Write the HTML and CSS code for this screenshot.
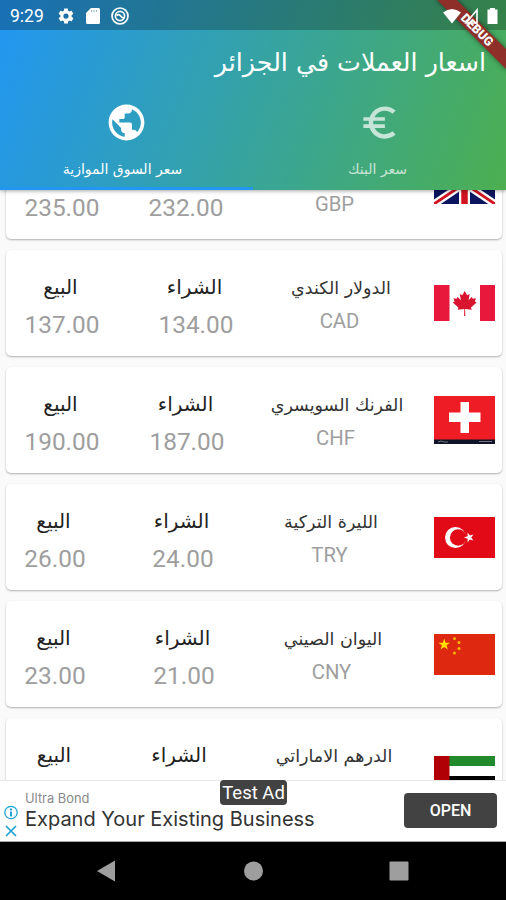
FILE: index.html
```html
<!DOCTYPE html>
<html lang="ar">
<head>
<meta charset="utf-8">
<title>اسعار العملات في الجزائر</title>
<link rel="stylesheet" href="styles.css">
</head>
<body>
<div class="phone">
  <header class="appbar">
    <div class="statusbar">
      <span class="clock">9:29</span>
      <svg class="st gear" viewBox="0 0 24 24"><path fill="#fff" fill-rule="evenodd" d="M19.4 13a7.500 7.500 0 0 0 0-2l2.100-1.600a.5.5 0 0 0 .1-.65l-2-3.450a.5.5 0 0 0-.6-.22l-2.500 1a7.300 7.300 0 0 0-1.700-1l-.37-2.650A.5.5 0 0 0 14 2h-4a.5.5 0 0 0-.5.42l-.37 2.650a7.700 7.700 0 0 0-1.700 1l-2.500-1a.5.5 0 0 0-.6.22l-2 3.450a.5.500 0 0 0 .12.65L4.600 11a8 8 0 0 0 0 2l-2.100 1.600a.5.5 0 0 0-.12.65l2 3.450c.12.22.39.300.6.22l2.500-1a7.300 7.300 0 0 0 1.700 1l.37 2.650c.04.24.25.42.5.42h4a.5.5 0 0 0 .5-.42l.37-2.650a7.700 7.700 0 0 0 1.700-1l2.500 1c.22.08.480 0 .6-.22l2-3.450a.5.5 0 0 0-.12-.65zM12 15.500a3.500 3.500 0 1 1 0-7 3.500 3.500 0 0 1 0 7z"/></svg>
      <svg class="st card-icon" viewBox="0 0 14 16"><path fill="#fff" d="M5 0h7.500Q14 0 14 1.500v13q0 1.500-1.500 1.500h-11Q0 16 0 14.500V5z"/><path stroke="#8fb4c8" stroke-width="1" d="M5.500 2v2M8 2v2M10.500 2v2"/></svg>
      <svg class="st" viewBox="0 0 18 18" fill="none" stroke="#fff"><circle cx="9" cy="9" r="8" stroke-width="1.700"/><circle cx="9" cy="9" r="4.600" stroke-width="1.700"/><path stroke-width="1.700" d="M5.500 8.500q2.500-2 4 .2t3.500 2.300"/></svg>
      <svg class="signals" viewBox="0 0 56 17"><path fill="#fff" d="M0 4.500Q9-2.500 18 4.500L9 15.500z"/><path fill="none" stroke="#fff" stroke-width="1.600" d="M34 2v13H23z"/><path fill="#fff" d="M44.500 1.500H47V0h5v1.500h2.500V16h-10z"/></svg>
    </div>
    <h1 dir="rtl">اسعار العملات في الجزائر</h1>
    <nav class="tabs">
      <div class="tab active">
        <svg viewBox="0 0 24 24"><path fill="#fff" d="M12 2C6.480 2 2 6.480 2 12s4.480 10 10 10 10-4.480 10-10S17.520 2 12 2zm-1 17.930c-3.950-.49-7-3.850-7-7.930 0-.62.080-1.210.210-1.790L9 15v1c0 1.100.9 2 2 2v1.930zm6.900-2.540c-.26-.81-1-1.390-1.900-1.390h-1v-3c0-.55-.45-1-1-1H8v-2h2c.55 0 1-.45 1-1V7h2c1.100 0 2-.9 2-2v-.41c2.930 1.190 5 4.060 5 7.410 0 2.080-.8 3.970-2.100 5.390z"/></svg>
        <span class="tablabel" dir="rtl">سعر السوق الموازية</span>
      </div>
      <div class="tab">
        <svg viewBox="0 0 24 24"><path fill="#fff" d="M15 18.500c-2.510 0-4.680-1.420-5.760-3.500H15v-2H8.580c-.05-.33-.08-.66-.08-1s.03-.67.080-1H15V9H9.240C10.320 6.920 12.500 5.500 15 5.500c1.610 0 3.090.59 4.230 1.570L21 5.300C19.410 3.870 17.300 3 15 3c-3.920 0-7.240 2.510-8.480 6H3v2h3.060c-.04.33-.06.66-.06 1s.02.67.06 1H3v2h3.520c1.240 3.490 4.560 6 8.480 6 2.310 0 4.410-.87 6-2.300l-1.780-1.770c-1.130.98-2.600 1.570-4.220 1.570z"/></svg>
        <span class="tablabel bank" dir="rtl">سعر البنك</span>
      </div>
    </nav>
    <div class="ribbon"><span>DEBUG</span></div>
  </header>

  <main class="list">
    <article class="rate gbp">
      <div class="price"><b></b><i>235.00</i></div>
      <div class="price"><b></b><i>232.00</i></div>
      <div class="name"><b></b><i>GBP</i></div>
      <svg class="flag" width="61" height="41" viewBox="0 0 61 41"><path fill="#0b1560" d="M0 0h61v41H0z"/><path stroke="#fff" stroke-width="7.500" d="M0 0l61 41M61 0L0 41"/><path stroke="#d01422" stroke-width="2.800" d="M0 0l61 41M61 0L0 41"/><path stroke="#fff" stroke-width="11" d="M30.500 0v41"/><path stroke="#fff" stroke-width="10" d="M0 20.500h61"/><path stroke="#d01422" stroke-width="6.500" d="M30.500 0v41M0 20.500h61"/></svg>
    </article>
    <article class="rate cad">
      <div class="price"><b>البيع</b><i>137.00</i></div>
      <div class="price"><b>الشراء</b><i>134.00</i></div>
      <div class="name"><b>الدولار الكندي</b><i>CAD</i></div>
      <svg class="flag" width="61" height="36" viewBox="0 0 61 36"><path fill="#fff" d="M0 0h61v36H0z"/><path fill="#e8173c" d="M0 0h15.500v36H0zM46 0h15v36H46z"/><path fill="#d8142f" d="M30.700 6l2.400 4.300 2.500-1.300-1 6.200 3.300-3.400.7 2 3.400-.6-1.200 3.400 1.800 1-5.600 4.800.7 2.300-6.600-.8.200 7h-1.200l.2-7-6.600.8.700-2.300-5.600-4.800 1.800-1-1.200-3.400 3.400.6.700-2 3.300 3.400-1-6.200 2.500 1.300z"/></svg>
    </article>
    <article class="rate chf">
      <div class="price"><b>البيع</b><i>190.00</i></div>
      <div class="price"><b>الشراء</b><i>187.00</i></div>
      <div class="name"><b>الفرنك السويسري</b><i>CHF</i></div>
      <svg class="flag" width="61" height="48" viewBox="0 0 61 48"><path fill="#ee1c24" d="M0 0h61v44H0z"/><path fill="#101426" d="M0 43.500h61V48H0z"/><path fill="#fff" d="M26.500 6h8.500v10.500h11.500V26H35v11h-8.500V26H15v-9.500h11.500z"/><path fill="none" stroke="#8a8c99" stroke-width=".8" d="M4 46l3-1 3 1h4M45 45.500h13"/></svg>
    </article>
    <article class="rate try">
      <div class="price"><b>البيع</b><i>26.00</i></div>
      <div class="price"><b>الشراء</b><i>24.00</i></div>
      <div class="name"><b>الليرة التركية</b><i>TRY</i></div>
      <svg class="flag" width="61" height="41" viewBox="0 0 61 41"><path fill="#e30a17" d="M0 0h61v41H0z"/><circle cx="21.500" cy="20.500" r="10.500" fill="#fff"/><circle cx="24.200" cy="20.500" r="8.300" fill="#e30a17"/><path fill="#fff" d="M30 20.500l3.600-1.200v-3.800l2.300 3.100 3.600-1.200-2.300 3.100 2.300 3.100-3.600-1.200-2.300 3.100v-3.800z"/></svg>
    </article>
    <article class="rate cny">
      <div class="price"><b>البيع</b><i>23.00</i></div>
      <div class="price"><b>الشراء</b><i>21.00</i></div>
      <div class="name"><b>اليوان الصيني</b><i>CNY</i></div>
      <svg class="flag" width="61" height="41" viewBox="0 0 61 41"><path fill="#de2910" d="M0 0h61v41H0z"/><path fill="#ffde00" d="M10.200 4.500l1.400 4.200H16l-3.500 2.600 1.300 4.200-3.600-2.600-3.600 2.600 1.300-4.200-3.500-2.600h4.400z"/><g fill="#f5b800"><circle cx="20.500" cy="4.500" r="1.500"/><circle cx="25" cy="8.500" r="1.500"/><circle cx="25" cy="14.500" r="1.500"/><circle cx="20.500" cy="19" r="1.500"/></g></svg>
    </article>
    <article class="rate aed">
      <div class="price"><b>البيع</b></div>
      <div class="price"><b>الشراء</b></div>
      <div class="name"><b>الدرهم الاماراتي</b></div>
      <svg class="flag" width="61" height="30" viewBox="0 0 61 30"><path fill="#fff" d="M0 0h61v30H0z"/><path fill="#218a2c" d="M15 0h46v10H15z"/><path d="M15 20h46v10H15z"/><path fill="#b00006" d="M0 0h15.500v30H0z"/></svg>
    </article>
  </main>

  <aside class="ad">
    <div class="adicons">
      <svg width="14" height="15" viewBox="0 0 14 15" fill="none" stroke="#1fa3d4" stroke-width="1.300"><circle cx="7" cy="7.500" r="6.200"/><path stroke-width="2" d="M7 3.500v2M7 6.500v5"/></svg>
      <svg width="14" height="14" viewBox="0 0 14 14" stroke="#1fa3d4" stroke-width="1.700"><path d="M2 2l10 10M12 2L2 12"/></svg>
    </div>
    <div class="adtext"><span class="brand">Ultra Bond</span><span class="headline">Expand Your Existing Business</span></div>
    <span class="open">OPEN</span>
    <span class="testad">Test Ad</span>
  </aside>
  <footer class="navbar">
    <svg width="506" height="58" viewBox="0 0 506 58" fill="#9e9e9e"><path d="M97 29l18-10.500v21z"/><circle cx="253.500" cy="29" r="9.500"/><rect x="389.500" y="19.500" width="19" height="19" rx="1"/></svg>
  </footer>
</div>
</body>
</html>
```
FILE: styles.css
```css
* { box-sizing: border-box; }
body { margin: 0; }
.phone {
  width: 506px; height: 900px; overflow: hidden;
  display: flex; flex-direction: column;
  background: #fafafa;
  font-family: Roboto, "DejaVu Sans", sans-serif;
}
.appbar {
  position: relative; z-index: 2; flex: none; height: 190px;
  background: linear-gradient(110deg, #2196f3 0%, #36a3a2 50%, #4caf50 100%);
  box-shadow: 0 1px 4px rgba(0,0,0,.35);
  color: #fff; display: flex; flex-direction: column;
}
.statusbar {
  height: 30px; flex: none; display: flex; align-items: center;
  background: rgba(0,0,0,.25); padding: 2px 7px 0 10px;
}
.clock { font-size: 17.500px; width: 47px; }
.st { width: 18px; height: 18px; margin-right: 11px; }
.card-icon { width: 14px; height: 16px; }
.signals { position: relative; z-index: 2; width: 56px; height: 17px; margin-left: auto; }
h1, .tablabel, .rate b { font-family: "DejaVu Sans", sans-serif; }
h1 { margin: 0; height: 66px; line-height: 66px; padding-right: 20px; font-size: 25.300px; font-weight: 400; white-space: nowrap; }
.tabs { display: flex; flex: 1; }
.tab { flex: 1; display: flex; flex-direction: column; align-items: center; opacity: .7; padding-top: 5px; }
.tab.active { opacity: 1; border-bottom: 3px solid #2196f3; }
.tab svg { width: 43px; height: 43px; }
.tablabel { height: 24px; line-height: 24px; margin: 13px 8px 0 0; font-size: 14px; white-space: nowrap; }
.tablabel.bank { margin-right: 4px; }
.ribbon {
  position: absolute; left: 427px; top: 22.500px; width: 100px; height: 14px;
  transform: rotate(45deg); background: #8e3029; text-align: center;
  box-shadow: 0 0 5px rgba(0,0,0,.5);
  font-size: 12.500px; line-height: 14px; font-weight: 900;
}
.list { flex: 1; min-height: 0; overflow: hidden; display: flex; flex-direction: column; gap: 11px; padding: 0 4px 0 6px; }
.rate {
  flex: none; height: 106px; background: #fff; border-radius: 5px;
  box-shadow: 0 1px 2px rgba(0,0,0,.3);
  display: grid; grid-template-columns: var(--s) var(--b) var(--n) 1fr;
}
.gbp { margin-top: -57px; --s: 112px; --b: 136px; --n: 162px; }
.cad { --s: 112px; --b: 156px; --n: 132px; }
.chf { --s: 112px; --b: 138px; --n: 160px; }
.try { --s: 98px; --b: 158px; --n: 136px; }
.cny { --s: 98px; --b: 160px; --n: 136px; }
.aed { --s: 96px; --b: 154px; --n: 154px; }
.rate b, .rate i { display: block; font-style: normal; font-weight: 400; white-space: nowrap; text-align: center; }
.price { padding-top: 18px; }
.price b { font-size: 20px; line-height: 38px; height: 38px; color: #222; direction: rtl; padding-right: 3px; }
.aed .price b { padding-right: 0; }
.price i { font-size: 24.400px; line-height: 38px; color: #9e9e9e; }
.name { padding-top: 22px; }
.name b { font-size: 17.500px; line-height: 32px; height: 32px; color: #333; direction: rtl; padding-left: 2px; }
.name i { font-size: 20.300px; line-height: 34px; color: #9e9e9e; padding-right: 1px; }
.flag { justify-self: end; align-self: center; margin-right: 7px; }
.gbp .flag { margin-bottom: 5px; }
.ad { position: relative; flex: none; height: 62px; background: #fff; border-top: 1px solid #e8e8e8; border-bottom: 1px solid #aaa; display: flex; }
.adicons { width: 25px; padding: 24px 0 0 4px; display: flex; flex-direction: column; gap: 4px; flex: none; }
.adtext { display: flex; flex-direction: column; padding-top: 9px; font-family: Inter, Roboto, sans-serif; flex: 1; white-space: nowrap; }
.brand { font-size: 12.900px; line-height: 17px; color: #8a8a8a; }
.headline { font-size: 20px; line-height: 25px; color: #333; }
.open { width: 93px; height: 35px; margin: 12px 9px 0 0; border-radius: 4px; background: #424242; color: #fff; text-align: center; font-size: 16px; font-weight: 500; line-height: 35px; }
.testad { position: absolute; left: 220px; top: -1px; width: 67px; height: 25px; border-radius: 4px; background: #424242; color: #fff; font-size: 18.500px; line-height: 26px; text-align: center; }
.navbar { height: 58px; flex: none; background: #000; }
.navbar svg { display: block; }
```
